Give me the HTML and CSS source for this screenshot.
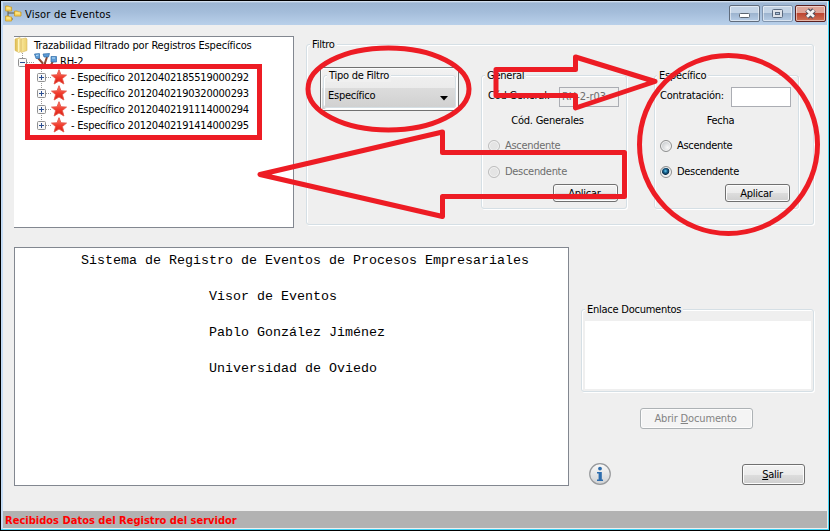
FILE: index.html
```html
<!DOCTYPE html>
<html lang="es">
<head>
<meta charset="utf-8">
<title>Visor de Eventos</title>
<link rel="stylesheet" href="styles.css">
</head>
<body>
<svg class="defs" width="0" height="0">
  <defs>
    <linearGradient id="starFill" x1="0" y1="0" x2="0" y2="1"><stop offset="0" stop-color="#ff8070"/><stop offset=".55" stop-color="#f03a2c"/><stop offset="1" stop-color="#d81e14"/></linearGradient>
    <linearGradient id="folderFill" x1="0" y1="0" x2="1" y2="0"><stop offset="0" stop-color="#dcb94a"/><stop offset=".45" stop-color="#fbeaa0"/><stop offset="1" stop-color="#ecd070"/></linearGradient>
    <linearGradient id="infoFill" x1="0" y1="0" x2="0" y2="1"><stop offset="0" stop-color="#fafafa"/><stop offset="1" stop-color="#cfd1d3"/></linearGradient>
    <symbol id="star" viewBox="0 0 16 16"><path d="M8 .7 10 5.800 15.500 6.100 11.400 9.600 12.900 15 8 12 3.100 15 4.600 9.600.5 6.100 6 5.800Z" fill="url(#starFill)" stroke="#e4574a" stroke-width=".9" stroke-linejoin="round"/></symbol>
    <symbol id="plus" viewBox="0 0 9 9"><rect x=".5" y=".5" width="8" height="8" rx="1" fill="#f8f8f8" stroke="#919191"/><path d="M2 4.500H7M4.500 2V7" stroke="#2c4f91"/></symbol>
  </defs>
</svg>
<div class="window">
  <header class="titlebar">
    <svg class="app-icon" width="17" height="17" viewBox="0 0 17 17"><path d="M3 4V14H8M3 8H12" fill="none" stroke="#635f42"/><g fill="#f7d35b" stroke="#c99a25" stroke-width=".8"><path d="M.6 1h3l1 1h2v4h-6zM9.500 6h3l1 1h2.500v4H9.500zM.6 11h3l1 1h2v4h-6z"/></g><path d="M1.500 3h4M10.500 8h4.500M1.500 13h4" stroke="#fff0a8"/></svg>
    <h1 class="title">Visor de Eventos</h1>
    <div class="controls">
      <span class="control"><svg width="29" height="15"><rect x="9.500" y="7.500" width="10" height="4" rx="1" fill="#fff" stroke="#5a6470"/></svg></span>
      <span class="control dim"><svg width="29" height="15"><rect x="9.500" y="3.500" width="10" height="8" rx="1" fill="#dfe3ea" stroke="#5a6a80"/><rect x="12.500" y="6.500" width="4" height="2" fill="#a9bfd9" stroke="#5a6a80"/></svg></span>
      <span class="control close"><svg width="29" height="15"><path d="m11 4 7 7m0-7-7 7" stroke="#4d4b58" stroke-width="5"/><path d="m11 4.200 7 6.600m0-6.600-7 6.600" stroke="#f4f4f4" stroke-width="2.800"/></svg></span>
    </div>
  </header>

  <main class="content">
    <section class="upper">
      <div class="tree">
        <div class="node root"><svg width="15" height="16" viewBox="0 0 15 16"><path d="M1 2 6 .5 7 1.500V14L5 15.500 1 13.500ZM7 2l5-1 1 1v11.500L7 15.500Z" fill="url(#folderFill)" stroke="#d8bb62" stroke-width=".6"/><path d="M4.500 2v13" stroke="#fff4c0"/></svg><span>Trazabilidad Filtrado por Registros Específicos</span></div>
        <div class="node branch">
          <svg class="twig" width="16" height="16"><path d="M4.500 0V5M9 9.500h7" stroke="#999" stroke-dasharray="1 1"/><rect x=".5" y="5.500" width="8" height="8" rx="1" fill="#f8f8f8" stroke="#919191"/><path d="M2 9.500h5" stroke="#2c4f91"/></svg>
          <svg width="23" height="16"><path d="M4 5 8.500 10v6M13 4 11 10v6M19 8l-3 6-5 1" fill="none" stroke="#8b4a34" stroke-width="2"/><g fill="#5d9bd5" stroke="#2e6ba8" stroke-width=".7"><path d="M.500 1 5.500 .6V5.500H2ZM9 1l6.500-.5-1 3.500H10ZM17 3.500h5.500v5.500H17z"/></g><path d="m2 2.500 2.500-.5M18 5h3" stroke="#c0e2fa"/></svg>
          <span>RH-2</span>
        </div>
        <div class="node leaf"><svg class="twig" width="14" height="16"><path d="M4.500 0V16M9 8.500h5" stroke="#999" stroke-dasharray="1 1"/><use href="#plus" x="0" y="4" width="9" height="9"/></svg><svg width="16" height="16"><use href="#star"/></svg><span>- Específico 20120402185519000292</span></div>
        <div class="node leaf"><svg class="twig" width="14" height="16"><path d="M4.500 0V16M9 8.500h5" stroke="#999" stroke-dasharray="1 1"/><use href="#plus" x="0" y="4" width="9" height="9"/></svg><svg width="16" height="16"><use href="#star"/></svg><span>- Específico 20120402190320000293</span></div>
        <div class="node leaf"><svg class="twig" width="14" height="16"><path d="M4.500 0V16M9 8.500h5" stroke="#999" stroke-dasharray="1 1"/><use href="#plus" x="0" y="4" width="9" height="9"/></svg><svg width="16" height="16"><use href="#star"/></svg><span>- Específico 20120402191114000294</span></div>
        <div class="node leaf"><svg class="twig" width="14" height="16"><path d="M4.500 0V8M9 8.500h5" stroke="#999" stroke-dasharray="1 1"/><use href="#plus" x="0" y="4" width="9" height="9"/></svg><svg width="16" height="16"><use href="#star"/></svg><span>- Específico 20120402191414000295</span></div>
      </div>

      <div class="group filter">
        <span class="legend">Filtro</span>
        <div class="combo">
          <div class="group combo-group">
            <span class="legend">Tipo de Filtro</span>
            <div class="combo-value"><span>Específico</span><svg width="8" height="5"><path d="M0 0H8L4 4.500Z"/></svg></div>
          </div>
        </div>
        <div class="group order general">
          <span class="legend">General</span>
          <div class="field"><span>Cód General:</span><span class="input disabled">RH-2-r03</span></div>
          <div class="caption">Cód. Generales</div>
          <div class="radio off"><i></i><span>Ascendente</span></div>
          <div class="radio off"><i></i><span>Descendente</span></div>
          <div class="button apply">Aplicar</div>
        </div>
        <div class="group order specific">
          <span class="legend">Específico</span>
          <div class="field"><span>Contratación:</span><span class="input"></span></div>
          <div class="caption">Fecha</div>
          <div class="radio"><i></i><span>Ascendente</span></div>
          <div class="radio checked"><i></i><span>Descendente</span></div>
          <div class="button apply">Aplicar</div>
        </div>
      </div>
    </section>

    <section class="lower">
      <div class="report">
        <p class="headline">Sistema de Registro de Eventos de Procesos Empresariales</p>
        <p>Visor de Eventos</p>
        <p>Pablo González Jiménez</p>
        <p>Universidad de Oviedo</p>
      </div>
      <aside class="side">
        <div class="group links"><span class="legend">Enlace Documentos</span><div class="list"></div></div>
        <div class="button open"><span>Abrir <u>D</u>ocumento</span></div>
        <div class="actions">
          <svg width="22" height="22" viewBox="0 0 22 22"><circle cx="11" cy="11" r="10.300" fill="url(#infoFill)" stroke="#97999c" stroke-width="1.200"/><circle cx="11" cy="5.600" r="1.900" fill="#2c6cad"/><path d="M8 9h4.800v7.500H14V18H8v-1.500h1.600v-6H8Z" fill="#2c6cad"/></svg>
          <div class="button exit"><span><u>S</u>alir</span></div>
        </div>
      </aside>
    </section>
  </main>
  <footer class="status">Recibidos Datos del Registro del servidor</footer>
</div>

<svg class="marks" width="830" height="531" viewBox="0 0 830 531">
  <rect x="27.500" y="66.500" width="232" height="71" stroke-linejoin="miter"/>
  <ellipse cx="388.500" cy="89" rx="80.500" ry="41"/>
  <circle cx="728.500" cy="144.500" r="89"/>
  <path d="M496 69.500H575.500V57L655 81.500 575.500 108V95.500H496Z"/>
  <path d="M624.500 152.500H442.500V132L260 174.500 442.500 216.500V196.500H624.500Z"/>
</svg>
</body>
</html>
```
FILE: styles.css
```css
* { box-sizing: border-box; }
body {
  margin: 0;
  width: 830px;
  height: 531px;
  overflow: hidden;
  font: 11px/14px "DejaVu Sans Condensed", "DejaVu Sans", sans-serif;
  font-stretch: condensed;
  letter-spacing: -0.25px;
  color: #000;
  white-space: nowrap;
}
svg { display: block; flex: none; }
.defs { position: absolute; }

.window {
  width: 830px;
  height: 531px;
  display: flex;
  flex-direction: column;
  background: #efefef;
  border: 1px solid #000;
  box-shadow: inset -1px -1px #43d3f5, inset 2px 0 #c5dcf5;
  padding: 0 2px 2px;
}
.titlebar {
  height: 24px;
  flex: none;
  display: flex;
  align-items: center;
  padding-left: 2px;
  background: linear-gradient(#e4edf7 0, #9db6d3 2px, #a4bdda 11px, #b9d0ea 100%);
}
.title { margin: 3px 0 0 3px; font: inherit; letter-spacing: .2px; }
.controls { display: flex; gap: 2px; margin: 1px 1px 0 auto; }
.control {
  width: 31px;
  height: 17px;
  border: 1px solid #606c7c;
  border-radius: 2px;
  box-shadow: inset 0 0 0 1px #ffffff80;
  background: linear-gradient(#c4d4e6 50%, #9db4cf 50%, #b6cce5);
}
.control.dim { border-color: #8195ae; }
.control.close { border-color: #5a1f1f; background: linear-gradient(#dea497 50%, #bd4632 50%, #cf7155); }

.content { flex: 1; padding: 11px 12px 0 11px; }
.upper { display: flex; height: 211px; }
.tree {
  width: 280px;
  height: 192px;
  background: #fff;
  border: solid #828790;
  border-width: 1px 1px 1px 0;
}
.node { display: flex; height: 16px; align-items: center; }
.node span { padding-top: 1px; }
.root span { margin-left: 5px; letter-spacing: -0.16px; }
.branch { padding-left: 4px; }
.branch span { margin-left: 3px; }
.leaf { padding-left: 23px; }
.leaf span { margin-left: 4px; letter-spacing: -0.23px; }

.group {
  position: relative;
  border: 1px solid #d5dfe5;
  border-radius: 3px;
  box-shadow: 1px 1px #fff, inset 1px 1px #fff;
}
.legend {
  position: absolute;
  top: -7px;
  left: 3px;
  padding: 0 2px;
  line-height: 13px;
  background: #efefef;
}
.filter {
  display: flex;
  align-items: flex-start;
  width: 508px;
  height: 181px;
  margin: 8px 0 0 12px;
  padding-left: 13px;
}
.combo {
  width: 139px;
  height: 44px;
  margin-top: 22px;
  padding: 7px 2px 2px;
  border: 1px solid #707070;
  box-shadow: inset 0 0 0 1px #fcfcfc;
  background: linear-gradient(#f2f2f2, #ebebeb 48%, #dcdcdc 48%, #cfcfcf);
}
.combo-group { height: 33px; border-color: #d5dfe5; }
.combo-group .legend { background: #f0f0f0; }
.combo-value { display: flex; justify-content: space-between; align-items: center; padding: 13px 7px 0 4px; }
.combo-value svg { margin-top: 5px; }
.order {
  width: 146px;
  height: 134px;
  margin: 30px 0 0 22px;
  padding-top: 11px;
  display: flex;
  flex-direction: column;
}
.order.specific { margin-left: 27px; width: 145px; }
.order.specific .legend { left: 2px; }
.field { display: flex; align-items: center; justify-content: space-between; padding: 0 7px 0 5px; height: 19px; }
.field span:first-child { margin-top: -2px; }
.general .field, .general .radio { padding-left: 6px; }
.input { width: 60px; height: 20px; border: 1px solid #abadb3; background: #fff; padding: 2px 2px; letter-spacing: -.05px; }
.input.disabled { color: #6d6d6d; background: #efefef; }
.caption { text-align: center; margin-top: 8px; margin-left: -12px; height: 14px; }
.radio { display: flex; align-items: center; gap: 5px; padding-left: 5px; height: 14px; margin-top: 11px; letter-spacing: -.3px; }
.radio + .radio { margin-top: 12px; }
.radio i {
  width: 12px;
  height: 12px;
  border: 1px solid #8e8f8f;
  border-radius: 50%;
  background: radial-gradient(circle at 65% 65%, #f8f8f8, #c8cbce 75%);
  box-shadow: inset 0 0 0 1px #f4f4f4;
}
.radio.off { color: #6d6d6d; }
.radio.off i { border-color: #bcbcbc; background: #e4e4e4; }
.radio.checked i { background: radial-gradient(circle at 45% 40%, #62caf0 0, #155b86 2px, #0d314c 3.500px, #eee 4.200px); }
.general .caption { margin-left: -13px; }
.button {
  display: flex;
  align-items: center;
  justify-content: center;
  border: 1px solid #707070;
  border-radius: 3px;
  box-shadow: inset 0 0 0 1px #fcfcfc;
  background: linear-gradient(#f2f2f2, #ebebeb 50%, #dddddd 50%, #cfcfcf);
}
.apply { width: 65px; height: 18px; margin: 5px 8px 0 auto; padding-top: 1px; padding-right: 2px; }

.lower { display: flex; }
.report {
  width: 555px;
  height: 239px;
  padding: 4px 0 0 66px;
  border: 1px solid #828790;
  background: #fff;
  font: 13.333px/18px "Liberation Mono", monospace;
  letter-spacing: 0;
}
.report p { margin: 0 0 18px 128px; }
.report .headline { margin-left: 0; }
.side { width: 233px; margin: 62px 0 0 12px; }
.links { height: 83px; padding: 11px 2px 0 3px; }
.list { height: 68px; background: #fff; }
.button.open { width: 113px; height: 21px; margin: 16px 0 0 59px; padding-right: 2px; color: #838383; border-color: #adb2b5; background: #f4f4f4; letter-spacing: -.15px; }
.actions { display: flex; justify-content: space-between; padding: 34px 9px 0 8px; }
.exit { width: 63px; height: 21px; margin-top: 1px; padding-right: 2px; }
.status {
  height: 17px;
  flex: none;
  padding: 3px 2px 0;
  background: #b2b2b2;
  color: #f00;
  font-weight: bold;
  letter-spacing: 0.02px;
}
.marks { position: absolute; inset: 0; fill: none; stroke: #ed1c24; stroke-width: 5; stroke-linejoin: round; }
```
